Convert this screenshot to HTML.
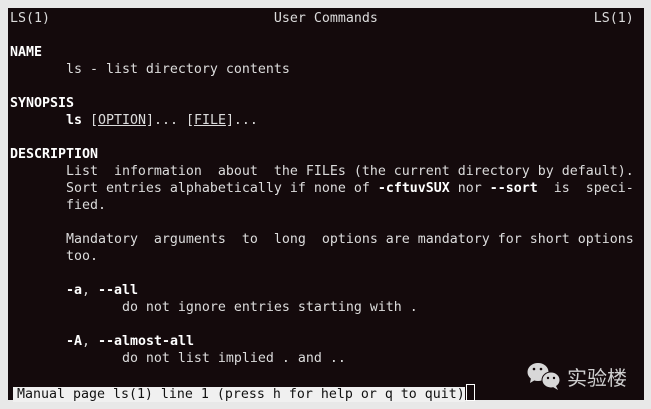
<!DOCTYPE html>
<html><head><meta charset="utf-8"><style>
html,body{margin:0;padding:0;width:651px;height:409px;overflow:hidden;background:#e8e8e8}
#t{position:absolute;left:8px;top:8px;width:636px;height:392px;background:#140a0c}
pre{position:absolute;left:10px;top:10px;margin:0;font-family:"DejaVu Sans Mono","Liberation Mono",monospace;font-size:13.29px;line-height:17px;color:#dcdcdc;white-space:pre}
b{color:#fff;font-weight:bold}
u{text-decoration:underline}
.s{background:#f0f0f0;color:#111;padding-left:4px;margin-left:3px}
.c{display:inline-block;width:7px;height:15px;border:1px solid #fff;vertical-align:-3px;margin-left:1px;background:#140a0c}
.wm{position:absolute;left:567px;top:362px;font-family:"Noto Sans CJK SC",sans-serif;font-size:20px;color:#cfcfcf}
</style></head><body>
<div id="t"></div>
<pre>LS(1)                            User Commands                           LS(1)

<b>NAME</b>
       ls - list directory contents

<b>SYNOPSIS</b>
       <b>ls</b> [<u>OPTION</u>]... [<u>FILE</u>]...

<b>DESCRIPTION</b>
       List  information  about  the FILEs (the current directory by default).
       Sort entries alphabetically if none of <b>-cftuvSUX</b> nor <b>--sort</b>  is  speci-
       fied.

       Mandatory  arguments  to  long  options are mandatory for short options
       too.

       <b>-a</b>, <b>--all</b>
              do not ignore entries starting with .

       <b>-A</b>, <b>--almost-all</b>
              do not list implied . and ..

<span class="s">Manual page ls(1) line 1 (press h for help or q to quit)</span><span class="c"></span></pre>
<svg style="position:absolute;left:526px;top:360px" width="38" height="32">
<ellipse cx="12" cy="12" rx="10.5" ry="9" fill="#d8d8d8"/>
<path d="M5 18 L4 23 L9 20Z" fill="#d8d8d8"/>
<ellipse cx="25" cy="20" rx="9.5" ry="8.5" fill="#140a0c"/>
<ellipse cx="25" cy="20" rx="8.5" ry="7.5" fill="#d8d8d8"/>
<path d="M30 26 L32 30 L27 27Z" fill="#d8d8d8"/>
<circle cx="8" cy="9" r="1.3" fill="#140a0c"/><circle cx="15" cy="9" r="1.3" fill="#140a0c"/>
<circle cx="22" cy="18" r="1.2" fill="#140a0c"/><circle cx="28" cy="18" r="1.2" fill="#140a0c"/>
</svg>
<div class="wm">实验楼</div>
</body></html>
